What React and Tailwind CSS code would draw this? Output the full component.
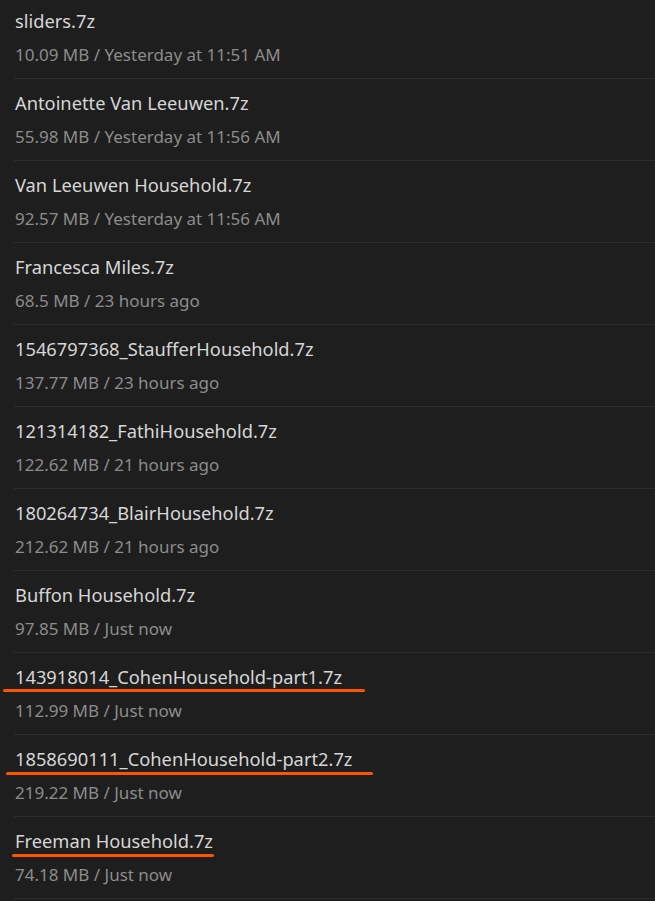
const files = [
  { name: "sliders.7z", meta: "10.09 MB / Yesterday at 11:51 AM" },
  { name: "Antoinette Van Leeuwen.7z", meta: "55.98 MB / Yesterday at 11:56 AM" },
  { name: "Van Leeuwen Household.7z", meta: "92.57 MB / Yesterday at 11:56 AM" },
  { name: "Francesca Miles.7z", meta: "68.5 MB / 23 hours ago" },
  { name: "1546797368_StaufferHousehold.7z", meta: "137.77 MB / 23 hours ago" },
  { name: "121314182_FathiHousehold.7z", meta: "122.62 MB / 21 hours ago" },
  { name: "180264734_BlairHousehold.7z", meta: "212.62 MB / 21 hours ago" },
  { name: "Buffon Household.7z", meta: "97.85 MB / Just now" },
  { name: "143918014_CohenHousehold-part1.7z", meta: "112.99 MB / Just now", mark: "left-[3px] w-[362px] top-[36px]" },
  { name: "1858690111_CohenHousehold-part2.7z", meta: "219.22 MB / Just now", mark: "left-[6px] w-[367px] top-[37px]" },
  { name: "Freeman Household.7z", meta: "74.18 MB / Just now", mark: "left-[12px] w-[202px] top-[37px]" },
];

export default function App() {
  return (
    <main
      className="min-h-[901px] overflow-hidden bg-[#1e1e1e]"
      style={{ fontFamily: '"Noto Sans", "Open Sans", sans-serif' }}
    >
      <div className="-mt-[3px]">
        {files.map((file) => (
          <FileRow key={file.name} file={file} />
        ))}
      </div>
    </main>
  );
}

function FileRow({ file }) {
  return (
    <div className="relative ml-[14px] border-b border-[#2c2c2c] pt-[12px] pb-[11px] pl-px">
      <div className="text-[18.3px] leading-[24px] text-[#d6d6d6]">{file.name}</div>
      <div className="mt-[10px] text-[17px] leading-[24px] text-[#8c8c8c]">{file.meta}</div>
      {file.mark && (
        <div className={`absolute -ml-[14px] h-[3px] rounded-full bg-[#ff5500] ${file.mark}`} />
      )}
    </div>
  );
}
